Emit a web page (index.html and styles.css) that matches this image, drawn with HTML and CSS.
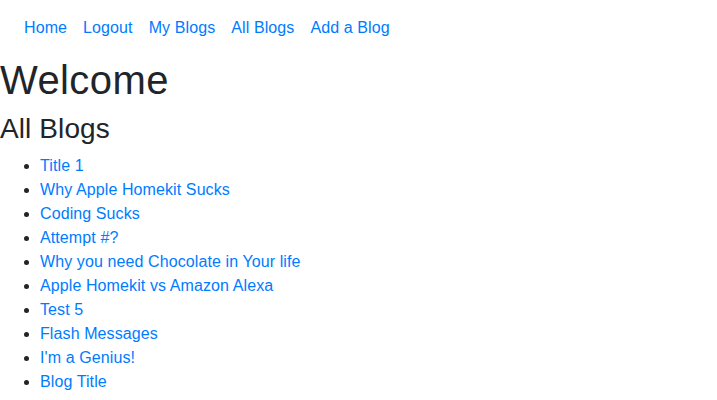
FILE: index.html
```html
<!DOCTYPE html>
<html>
<head>
<meta charset="utf-8">
<link rel="stylesheet" href="styles.css">
</head>
<body>
<nav class="navbar">
  <ul class="nav-list">
    <li><a class="nav-link" href="#">Home</a></li>
    <li><a class="nav-link" href="#">Logout</a></li>
    <li><a class="nav-link" href="#">My Blogs</a></li>
    <li><a class="nav-link" href="#">All Blogs</a></li>
    <li><a class="nav-link" href="#">Add a Blog</a></li>
  </ul>
</nav>
<h1 class="title">Welcome</h1>
<h3 class="subtitle">All Blogs</h3>
<ul class="blog-list">
  <li><a href="#">Title 1</a></li>
  <li><a href="#">Why Apple Homekit Sucks</a></li>
  <li><a href="#">Coding Sucks</a></li>
  <li><a href="#">Attempt #?</a></li>
  <li><a href="#">Why you need Chocolate in Your life</a></li>
  <li><a href="#">Apple Homekit vs Amazon Alexa</a></li>
  <li><a href="#">Test 5</a></li>
  <li><a href="#">Flash Messages</a></li>
  <li><a href="#">I'm a Genius!</a></li>
  <li><a href="#">Blog Title</a></li>
</ul>
</body>
</html>
```
FILE: styles.css
```css
html, body {
  margin: 0;
  background: #fff;
}
body {
  font-family: "Liberation Sans", Arial, sans-serif;
  font-size: 16px;
  line-height: 1.5;
  color: #212529;
  letter-spacing: 0.1px;
}
a {
  color: #007bff;
  text-decoration: none;
}
.navbar {
  padding: 8px 16px;
}
.nav-list {
  display: flex;
  list-style: none;
  margin: 0;
  padding: 0;
}
.nav-link {
  display: block;
  padding: 8px 8px;
}
.title {
  font-size: 40px;
  font-weight: 500;
  line-height: 1.2;
  letter-spacing: 0.4px;
  margin: 0 0 8px;
}
.subtitle {
  font-size: 28px;
  font-weight: 500;
  line-height: 1.2;
  margin: 0 0 8px;
}
.blog-list {
  margin: 0 0 16px;
  padding-left: 40px;
}
```
